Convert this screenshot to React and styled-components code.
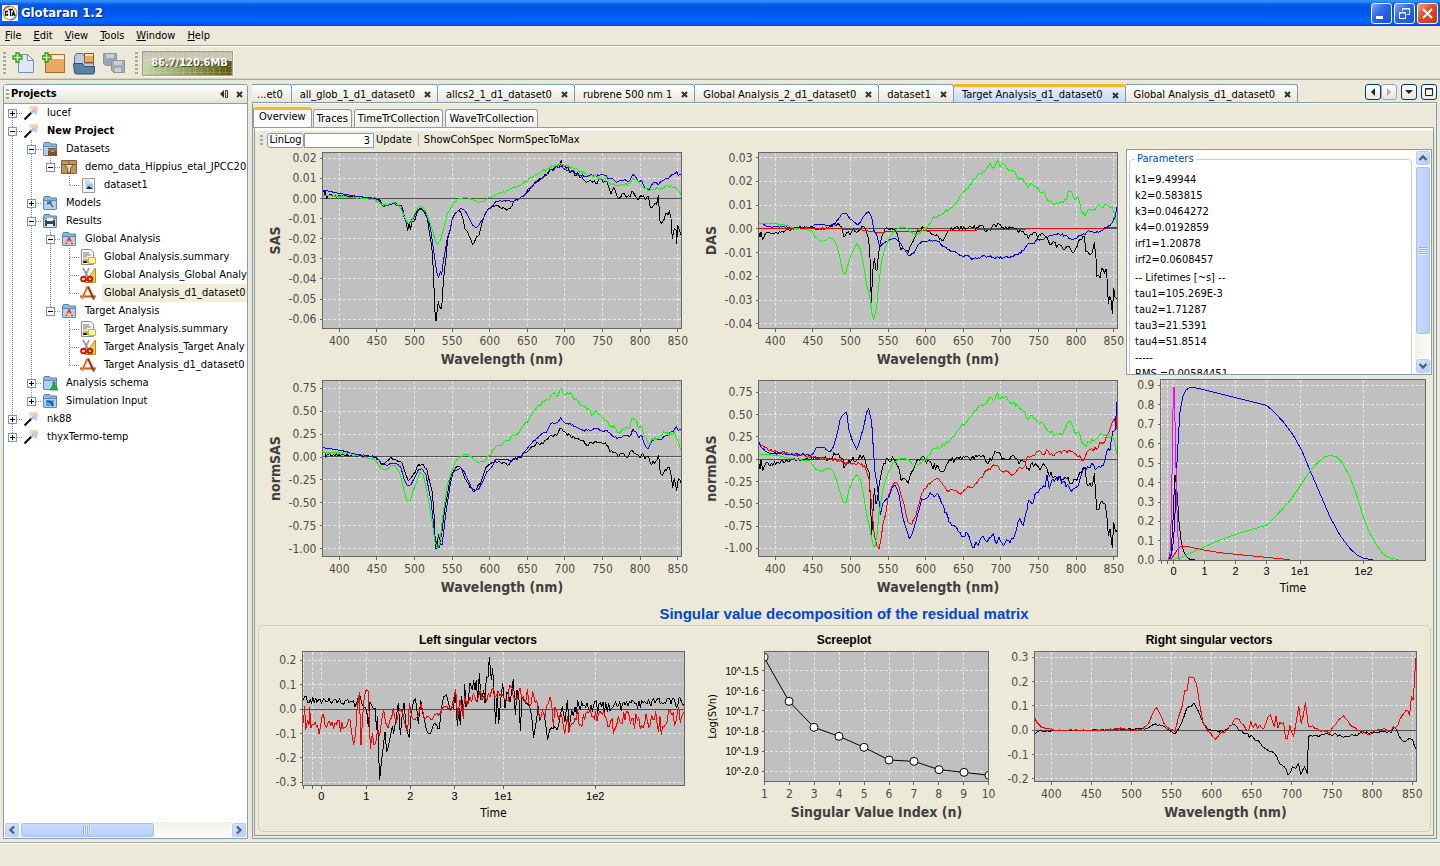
import React from "react";
import styled, { createGlobalStyle, css } from "styled-components";

const UI = '"DejaVu Sans Condensed", "DejaVu Sans", sans-serif';
const ARIAL = '"Liberation Sans", Arial, sans-serif';
const BEIGE = "#ece9d8";
const EDGE = "#7f9db9";

const GlobalStyle = createGlobalStyle`
  *, *::before, *::after { box-sizing: border-box; }
  body { margin: 0; background: ${BEIGE}; font: 11px/14px ${UI}; color: #000; }
  button, input { font: inherit; color: inherit; margin: 0; padding: 0; }
  button { background: none; border: 0; white-space: nowrap; }
  svg { display: block; flex: none; }
`;

/* ---------- window frame ---------- */
const Window = styled.div`
  display: flex;
  flex-direction: column;
  min-height: 100vh;
`;
const TitleBar = styled.header`
  display: flex;
  align-items: center;
  gap: 3px;
  height: 26px;
  padding: 0 2px;
  background: linear-gradient(#2b8bff 0, #3a93ff 1px, #0a5fe8 4px, #0054e3 8px, #0058ec 14px, #0066ff 19px, #0061fa 23px, #003dd0 26px);
`;
const AppTitle = styled.h1`
  flex: 1;
  margin: 0;
  font: bold 13px/16px ${UI};
  color: #fff;
  text-shadow: 1px 1px 1px #0a1883;
`;
const FrameButton = styled.button`
  display: grid;
  place-items: center;
  width: 21px;
  height: 21px;
  margin-left: -1px;
  border: 1px solid #fff;
  border-radius: 3px;
  background: ${(p) =>
    p.$close
      ? "linear-gradient(135deg, #f0a088, #e0492a 45%, #c83a10)"
      : "linear-gradient(135deg, #7ea6f8, #2a66e8 45%, #1c50d8)"};
`;
const FrameButtons = styled.div`
  display: flex;
  gap: 3px;
`;
const MenuBar = styled.nav`
  display: flex;
  gap: 12px;
  height: 21px;
  padding: 2px 5px;
  border-bottom: 1px solid #fff;
  box-shadow: inset 0 -1px #aca899;
`;
const MenuItem = styled.button`
  &::first-letter { text-decoration: underline; }
`;
const ToolBar = styled.div`
  display: flex;
  align-items: center;
  height: 33px;
  padding: 0 3px;
  border-bottom: 1px solid #aca899;
  box-shadow: inset 0 -1px #d6d2c2;
`;
const Grip = styled.span`
  flex: none;
  width: 3px;
  height: ${(p) => p.$h}px;
  background: repeating-linear-gradient(#a9a696 0 2px, transparent 2px 4px);
`;
const ToolButton = styled.button`
  display: grid;
  place-items: center;
  width: 30px;
  height: 28px;
`;
const ToolGroup = styled.div`
  display: flex;
  padding: 0 6px 0 3px;
`;
const HeapMeter = styled.button`
  width: 91px;
  height: 25px;
  margin-left: 4px;
  padding-left: 4px;
  border: 1px solid #a3a08c;
  box-shadow: 0 1px #fff, 1px 0 #fff;
  background:
    linear-gradient(rgba(236, 233, 216, 0.2) 1px, transparent 1px) 0 2px / 100% 6px,
    linear-gradient(90deg, rgba(236, 233, 216, 0.2) 1px, transparent 1px) 4px 0 / 6px 100%,
    linear-gradient(#c2c0ae, #d3d1be) 0 0 / 100% 9px no-repeat,
    linear-gradient(90deg, #c5d8a4, #8c9a58 55%, #6f6d1e 85%, #5e5a10);
  font: bold 11px/22px ${UI};
  color: #fff;
  text-shadow: 1px 1px 1px #333;
`;
const Main = styled.main`
  flex: 1;
  display: flex;
  gap: 4px;
  padding: 4px 3px 3px;
`;
const StatusBar = styled.footer`
  height: 24px;
  border-top: 1px solid #aca899;
  box-shadow: inset 0 1px #fff;
`;

/* ---------- project tree ---------- */
const SidePanel = styled.aside`
  flex: none;
  display: flex;
  flex-direction: column;
  width: 245px;
  border: 1px solid ${EDGE};
  border-radius: 3px 3px 0 0;
  background: #fff;
  overflow: hidden;
`;
const PanelHeader = styled.div`
  display: flex;
  align-items: center;
  height: 19px;
  padding: 0 0 0 2px;
  border-bottom: 1px solid ${EDGE};
  background: linear-gradient(#fff, #f0efe8 60%, #e4e2d4);
`;
const PanelTitle = styled.h2`
  flex: 1;
  margin: 0 0 0 2px;
  font: bold 11px/14px ${UI};
`;
const IconButton = styled.button`
  display: grid;
  place-items: center;
  width: 15px;
  height: 15px;
`;
const Tree = styled.ul`
  flex: 1;
  margin: 0;
  padding: 0;
  list-style: none;
`;
const TreeRow = styled.li`
  display: flex;
  align-items: center;
  height: 18px;
  white-space: nowrap;
`;
const TreeLabel = styled.span`
  margin-left: 6px;
  padding: 0 2px;
  line-height: 18px;
  font-weight: ${(p) => (p.$bold ? "bold" : "normal")};
  background: ${(p) => (p.$selected ? "#f3eed9" : "none")};
`;
const ScrollTrack = styled.div`
  display: flex;
  flex-direction: ${(p) => (p.$vertical ? "column" : "row")};
  flex: none;
  ${(p) => (p.$vertical ? css`width: 16px;` : css`height: 16px;`)}
  background: linear-gradient(${(p) => (p.$vertical ? "90deg" : "180deg")}, #f0efe8, #fefefb);
`;
const ScrollButton = styled.button`
  display: grid;
  place-items: center;
  flex: none;
  width: 16px;
  height: 16px;
  border: 1px solid #fff;
  border-radius: 3px;
  background: linear-gradient(135deg, #dbe6fe, #b6cbf7);
  box-shadow: inset 0 0 0 1px #b9cbf3;
`;
const ScrollThumb = styled.div`
  display: grid;
  place-items: center;
  flex: ${(p) => p.$size} 0 0;
  border: 1px solid #fff;
  border-radius: 3px;
  background: linear-gradient(${(p) => (p.$vertical ? "90deg" : "180deg")}, #cbdafd, #b9cdf9);
  box-shadow: inset 0 0 0 1px #a9bff0;
  &::after {
    content: "";
    width: 8px;
    height: 8px;
    background: repeating-linear-gradient(${(p) => (p.$vertical ? "180deg" : "90deg")}, #8fb0f5 0 1px, #e8f0ff 1px 2px);
  }
`;
const ScrollRest = styled.div`
  flex: ${(p) => p.$size} 0 0;
`;

/* ---------- document area ---------- */
const Documents = styled.section`
  flex: 1;
  min-width: 0;
  display: flex;
  flex-direction: column;
`;
const TabStrip = styled.div`
  display: flex;
  height: 18px;
`;
const DocTab = styled.div`
  display: flex;
  align-items: center;
  gap: 5px;
  height: ${(p) => (p.$active ? 19 : 18)}px;
  padding: ${(p) => (p.$cut ? "2px 8px 0 5px" : "2px 2px 0 8px")};
  border: 1px solid ${EDGE};
  border-width: 1px 1px 0 0;
  border-radius: 0 3px 0 0;
  background: linear-gradient(#fff, #f1f0e9 60%, #e9e7da);
  ${(p) =>
    p.$active &&
    css`
      border-top: 3px solid #fdb52c;
      padding-top: 0;
      background: linear-gradient(#e8eefb, #c9d8f6);
    `}
`;
const StripButtons = styled.div`
  display: flex;
  gap: 4px;
  margin-left: auto;
`;
const StripGroup = styled.div`
  display: flex;
`;
const StripButton = styled.button`
  display: grid;
  place-items: center;
  width: 16px;
  height: 16px;
  border: 1px solid ${(p) => (p.disabled ? "#8fa6bd" : "#003c74")};
  border-radius: 3px;
  background: linear-gradient(#fff, #e8e6da);
`;
const DocBody = styled.div`
  flex: 1;
  display: flex;
  flex-direction: column;
  padding: 4px 2px 2px 1px;
  border: 1px solid ${EDGE};
  box-shadow: inset 0 1px #fff;
`;
const ViewTabs = styled.div`
  display: flex;
  align-items: flex-end;
  gap: 2px;
  height: 20px;
`;
const ViewTab = styled.button`
  height: 18px;
  padding: 0 3px;
  border: 1px solid #919b9c;
  border-bottom: 0;
  border-radius: 3px 3px 0 0;
  background: linear-gradient(#fff, #f0efe6);
  ${(p) =>
    p.$active &&
    css`
      height: 21px;
      margin: 0 -1px -1px -1px;
      padding: 0 5px 4px;
      border-top: 3px solid #fdb52c;
      background: #fbfbfa;
    `}
`;
const View = styled.div`
  flex: 1;
  border: 1px solid #919b9c;
  box-shadow: inset 0 3px #fff;
  padding-top: 3px;
`;
const ViewBar = styled.div`
  display: flex;
  align-items: center;
  height: 18px;
  padding: 0 5px;
`;
const Toggle = styled.button`
  width: 37px;
  height: 15px;
  margin-left: 4px;
  border: 1px solid ${EDGE};
  border-radius: 3px;
  background: #fff;
  line-height: 12px;
`;
const NumberBox = styled.input`
  width: 70px;
  height: 15px;
  padding-right: 3px;
  border: 1px solid ${EDGE};
  background: #fff;
  text-align: right;
`;
const FlatButton = styled.button`
  margin: 0 2px;
`;
const Divider = styled.span`
  width: 1px;
  height: 12px;
  margin: 0 3px 0 4px;
  background: #b5b2a2;
`;
const ChartGrid = styled.div`
  display: grid;
  grid-template-columns: 434fr 434fr 306fr;
  padding: 0 1px 0 3px;
`;
const ChartSvg = styled.svg`
  width: 100%;
  height: auto;
`;
const ParamPanel = styled.div`
  display: flex;
  aspect-ratio: 306 / 226;
  align-self: start;
  border: 1px solid ${EDGE};
  background: #fff;
  overflow: hidden;
`;
const ParamScroll = styled.div`
  flex: 1;
  min-width: 0;
  overflow: hidden;
  padding: 2px 3px 0 2px;
`;
const ParamBox = styled.fieldset`
  min-width: 0;
  height: 240px;
  margin: 0;
  padding: 6px 5px;
  border: 1px solid #d0d0bf;
  border-radius: 4px;
`;
const Legend = styled.legend`
  margin-left: 0;
  padding: 0 2px;
  color: #0046d5;
`;
const ParamList = styled.ul`
  margin: 0 0 2px;
  padding: 0;
  list-style: none;
  line-height: 16px;
`;
const SectionTitle = styled.h2`
  margin: 0;
  font: bold 15px/22px ${ARIAL};
  text-align: center;
  color: #0046d5;
`;
const SvdBox = styled.div`
  display: grid;
  grid-template-columns: 435fr 306fr 430fr;
  margin: 0 2px 2px 3px;
  border: 1px solid #d0d0bf;
  border-radius: 5px;
`;

/* ---------- chart drawing ---------- */

/* Expands a compact trace ("x,y" knots, "nA" sets the jitter) to a polyline. */
function expand(text, seed) {
  let s = seed * 7919 + 17;
  const rnd = () => {
    s = (s * 1103515245 + 12345) % 2147483648;
    return s / 2147483648 - 0.5;
  };
  let noise = 0;
  let prev = null;
  const out = [];
  text.trim().split(/\s+/).forEach((token) => {
    if (token[0] === "n") {
      noise = Number(token.slice(1));
      return;
    }
    const [x, y] = token.split(",").map(Number);
    if (prev && noise > 0) {
      const steps = Math.floor((x - prev[0]) / 4);
      for (let i = 1; i < steps; i += 1) {
        const t = i / steps;
        out.push([prev[0] + (x - prev[0]) * t, prev[1] + (y - prev[1]) * t + rnd() * 2 * noise]);
      }
    }
    out.push([x, y]);
    prev = [x, y];
  });
  return out.map(([x, y]) => x.toFixed(1) + "," + y.toFixed(1)).join(" ");
}

const GRAY = "#4c4c4c";

function Chart({ label, w, h, box, xt, yt, zero, series, from, scale = [1 / 3, 1 / 3], title, xLabel, yLabel, small, smallY, marks, boldX = true }) {
  const [x0, y0, x1, y1] = box;
  const id = "clip-" + label.replace(/\W/g, "");
  const mid = (x0 + x1) / 2;
  return (
    <ChartSvg viewBox={`0 0 ${w} ${h}`} role="img" aria-label={label}>
      <clipPath id={id}>
        <rect x={x0} y={y0} width={x1 - x0} height={y1 - y0} />
      </clipPath>
      <rect x={x0} y={y0} width={x1 - x0} height={y1 - y0} fill="#c0c0c0" />
      <g shapeRendering="crispEdges" stroke="#e6e6e6" strokeDasharray="3 2">
        {xt.map(([x], i) => <line key={i} x1={x} x2={x} y1={y0} y2={y1} />)}
        {yt.map(([y], i) => <line key={i} x1={x0} x2={x1} y1={y} y2={y} />)}
      </g>
      {zero && <line x1={x0} x2={x1} y1={zero} y2={zero} stroke="#505050" shapeRendering="crispEdges" />}
      <g clipPath={`url(#${id})`}>
        <g transform={`translate(${from[0]} ${from[1]}) scale(${scale[0]} ${scale[1]})`} fill="none" shapeRendering="crispEdges">
          {series.map(([color, pts], i) => (
            <polyline key={i} points={expand(pts, i + 1)} stroke={color} strokeLinejoin="round" vectorEffect="non-scaling-stroke" />
          ))}
        </g>
        {marks && (
          <g stroke="#000">
            <polyline points={marks.map((m) => m.join(",")).join(" ")} fill="none" />
            {marks.map(([x, y]) => <circle key={x} cx={x} cy={y} r="4" fill="#fff" />)}
          </g>
        )}
      </g>
      <rect x={x0} y={y0} width={x1 - x0} height={y1 - y0} fill="none" stroke="#666" shapeRendering="crispEdges" />
      <g stroke="#666" shapeRendering="crispEdges">
        {xt.map(([x], i) => <line key={i} x1={x} x2={x} y1={y1} y2={y1 + 3} />)}
        {yt.map(([y], i) => <line key={i} x1={x0 - 3} x2={x0} y1={y} y2={y} />)}
      </g>
      <g fontFamily={small ? ARIAL : UI} fontSize={small ? 11 : 12} fill={small ? "#000" : GRAY} textAnchor="middle">
        {xt.map(([x, t], i) => <text key={i} x={x} y={y1 + (small ? 14 : 16)}>{t}</text>)}
      </g>
      <g fontFamily={smallY ? ARIAL : UI} fontSize={smallY ? 10 : 12} fill={smallY ? "#000" : GRAY} textAnchor="end">
        {yt.map(([y, t], i) => <text key={i} x={x0 - 6} y={y + 4}>{t}</text>)}
      </g>
      <text x={mid} y={y1 + (boldX ? 35 : 31)} textAnchor="middle" fontFamily={UI} fontSize={boldX ? 14 : 12} fontWeight={boldX ? "bold" : "normal"} fill={boldX ? "#404040" : "#000"}>
        {xLabel}
      </text>
      {yLabel && (
        <text transform={`translate(${smallY ? 22 : x0 - 43} ${(y0 + y1) / 2}) rotate(-90)`} textAnchor="middle" fontFamily={UI} fontSize={smallY ? 11 : 14} fontWeight={smallY ? "normal" : "bold"} fill={smallY ? "#000" : "#404040"}>
          {yLabel}
        </text>
      )}
      {title && (
        <text x={title[1]} y="18" textAnchor="middle" fontFamily={ARIAL} fontSize="12" fontWeight="bold">{title[0]}</text>
      )}
    </ChartSvg>
  );
}

const ticks = (start, step, labels) => labels.map((t, i) => [start + step * i, t]);
const WAVES = ["400", "450", "500", "550", "600", "650", "700", "750", "800", "850"];
const BLUE = "#2200ee";
const GREEN = "#00ff00";

const sas = [
  ["#000", "203,140 208,138 209,150 212,138 214,160 n5 220,152 250,152 n3 340,157 368,162 378,170 385,184 400,178 415,176 420,172 430,182 440,182 448,215 454,235 458,257 462,238 466,253 472,228 480,224 487,200 495,190 502,192 510,202 517,220 522,255 530,300 534,360 538,450 541,526 544,526 546,500 550,468 553,485 557,490 560,492 563,440 568,380 573,340 577,290 585,258 592,220 600,203 612,195 620,208 626,230 630,253 638,262 643,275 648,285 653,298 658,292 664,276 672,270 678,245 685,220 692,205 703,190 712,183 725,182 735,188 745,188 755,196 765,190 772,182 776,168 785,165 800,155 815,140 n6 830,125 845,110 860,100 875,88 890,72 910,68 919,46 922,62 935,70 950,80 965,90 980,95 995,112 1010,110 1022,115 1035,100 1045,112 1055,108 1062,130 1068,148 1075,128 1085,150 1090,160 1098,155 1102,145 1115,157 1125,155 1131,138 1140,152 1150,165 1157,150 1165,152 1172,165 1180,155 1186,187 1195,182 1205,178 1210,152 1215,228 1220,236 1228,222 1232,205 1240,210 1243,197 1248,220 1252,282 1258,250 1263,255 1265,295 1268,240 1275,262 1277,270"],
  [BLUE, "203,136 215,137 250,145 300,153 350,159 n2 370,165 380,178 390,182 402,180 415,175 430,182 440,190 447,215 455,235 465,235 472,222 480,210 490,192 500,192 510,205 520,225 528,260 535,310 540,345 546,385 551,398 556,380 560,388 565,350 570,320 577,280 585,255 592,220 600,205 617,189 627,195 640,215 650,235 662,248 672,240 682,225 690,208 700,193 712,185 725,168 760,167 775,170 795,160 810,148 825,132 840,115 855,105 865,98 n4 880,80 900,70 919,62 925,70 940,75 960,83 980,93 1000,92 1020,90 1050,92 1058,100 1075,102 1085,112 1105,106 1125,105 1133,88 1142,95 1150,110 1160,105 1168,125 1180,137 1190,120 1200,113 1210,120 1220,108 1235,100 1245,95 1260,85 1265,80 1270,92 1278,90"],
  [GREEN, "n1 203,150 230,153 300,158 350,163 362,165 375,176 390,180 400,178 415,172 430,180 440,195 450,220 458,232 468,232 475,215 483,198 493,185 505,187 515,205 525,235 535,265 542,288 547,300 555,288 562,265 570,235 577,205 585,195 595,175 610,162 632,157 655,165 672,172 688,168 n2 700,158 715,155 730,145 750,142 770,130 795,123 n4 810,110 830,98 850,85 880,70 900,60 919,55 925,60 960,70 970,77 990,85 1000,95 1020,92 1040,102 1050,100 1065,115 1085,122 1105,120 1125,115 1135,100 1145,105 1155,118 1170,132 1180,138 1195,132 1210,130 1230,125 1260,125 1270,135 1279,152"],
];
const das = [
  ["#000", "n4 190,255 195,275 198,262 203,285 210,268 225,264 240,264 270,258 300,250 350,246 n6 370,255 390,250 420,240 428,235 440,245 446,275 455,262 465,270 475,250 485,262 495,253 505,243 515,265 521,280 525,340 529,472 533,380 538,340 543,375 546,375 550,330 556,292 562,270 575,248 590,250 600,255 610,280 618,315 626,310 632,318 640,322 650,295 660,275 668,255 690,248 700,260 712,270 730,275 742,288 752,272 765,255 790,248 830,248 850,248 862,240 870,258 888,256 893,240 903,245 909,235 920,247 940,250 965,250 970,262 985,260 1000,280 1010,270 1020,262 1028,280 1040,265 1055,275 1065,300 1080,292 1085,308 1095,300 1105,315 1120,305 1132,322 1142,310 1150,290 1160,285 1168,275 1173,320 1178,320 1185,330 1192,322 1198,292 1203,340 1204,395 1210,390 1215,398 1220,370 1225,375 1228,385 1233,372 1236,400 1240,475 1244,455 1248,465 1252,505 1256,430 1260,455 1265,462"],
  ["#f00", "190,250 400,250 440,252 500,255 530,260 555,263 590,258 620,258 640,260 680,257 760,256 820,257 860,254 990,253 1000,250 1240,249 1266,247"],
  ["#00f", "n2 190,235 205,238 220,245 250,245 300,247 350,247 360,238 385,238 400,242 415,240 430,222 440,207 455,204 465,222 475,230 487,240 497,230 505,215 520,200 526,208 532,225 536,255 543,265 548,280 554,305 563,296 580,288 590,282 602,280 612,290 625,310 642,333 658,322 668,302 680,290 700,288 n4 728,290 740,300 758,315 775,320 790,328 800,333 815,330 830,343 850,338 870,333 890,337 905,336 925,338 950,335 965,328 985,318 1000,295 1010,297 1030,283 1060,275 1080,268 1110,270 1130,285 1145,280 1160,270 1175,262 1190,258 1210,262 1225,255 1240,243 1250,235 1255,225 1260,215 1266,185"],
  [GREEN, "n1 190,235 240,236 270,240 300,250 350,256 360,275 380,290 390,287 400,278 415,282 425,300 435,340 445,385 452,385 460,355 468,330 485,296 495,310 505,355 515,420 525,460 530,500 536,525 545,485 551,420 560,345 572,305 585,275 600,255 620,245 635,250 648,262 665,272 680,258 n5 700,240 715,215 735,212 750,200 780,180 800,148 820,130 833,105 843,100 850,85 860,88 875,68 885,55 895,70 908,47 915,65 925,55 940,75 955,75 965,95 985,105 998,128 1008,115 1020,125 1035,142 1045,140 1055,162 1075,178 1100,170 1115,165 1120,137 1130,140 1138,162 1150,158 1158,195 1170,212 1182,192 1200,195 1212,178 1220,185 1235,180 1250,185 1260,215 1266,235"],
];
const normSas = [
  ["#000", "203,240 210,242 212,256 n4 220,248 300,250 350,252 370,262 382,278 395,268 410,258 425,265 437,268 447,290 460,325 470,315 480,302 487,282 500,278 515,290 524,330 532,360 538,440 541,528 546,528 550,488 556,510 562,470 568,420 575,380 582,340 590,305 600,290 612,283 622,295 630,320 640,335 650,350 655,358 665,350 678,330 688,300 697,282 712,272 735,270 757,280 772,265 795,255 n6 810,240 835,225 850,213 865,215 875,203 890,192 905,190 919,168 925,180 945,190 960,200 980,205 995,220 1015,215 1035,210 1055,220 1065,240 1080,242 1090,255 1105,243 1120,255 1132,235 1142,245 1155,258 1163,243 1170,260 1178,252 1186,275 1203,268 1211,250 1216,305 1222,310 1230,293 1243,285 1250,320 1253,348 1258,318 1265,355 1270,320 1278,332"],
  [BLUE, "n1 203,227 240,232 300,246 350,253 370,262 380,275 395,280 410,273 425,275 437,285 447,320 457,340 468,338 480,315 490,293 500,290 512,305 520,345 528,385 535,450 541,500 548,525 553,528 556,515 561,518 567,470 573,420 580,375 587,330 595,300 605,295 617,287 627,298 640,325 650,350 660,355 672,350 685,325 695,300 710,285 722,262 745,262 770,265 790,257 n3 805,245 820,225 840,205 860,185 875,180 887,155 905,152 917,138 928,152 945,155 965,168 985,175 1005,175 1020,168 1035,175 1055,175 1070,190 1090,198 1110,192 1125,193 1133,172 1142,178 1152,198 1160,190 1170,220 1180,230 1190,208 1205,200 1220,202 1235,190 1255,178 1265,165 1270,175 1278,172"],
  [GREEN, "n1 203,242 240,240 280,244 330,258 355,258 370,275 380,290 395,292 410,280 422,282 435,305 445,345 455,385 465,388 475,355 485,330 495,300 505,310 515,355 525,410 533,460 540,510 548,530 556,500 562,445 568,400 577,340 590,300 600,270 615,255 632,246 650,255 670,272 685,268 n6 700,252 718,232 728,220 740,222 760,205 780,190 795,178 810,155 830,130 842,110 862,90 880,85 888,68 898,62 908,75 919,50 925,65 945,62 960,82 980,100 1000,108 1010,130 1020,118 1040,135 1055,145 1065,165 1078,160 1088,180 1105,172 1125,165 1130,140 1142,142 1150,170 1160,162 1170,195 1180,215 1195,200 1210,198 1230,182 1250,188 1258,180 1270,208 1279,235"],
];
const normDas = [
  ["#000", "n6 190,265 195,290 198,265 203,295 210,278 250,272 290,263 340,262 380,255 400,262 n9 420,248 430,245 445,262 447,288 458,275 470,265 490,262 505,250 515,285 522,300 527,400 530,492 535,400 538,350 543,395 548,380 556,320 562,290 575,258 600,265 610,285 618,325 630,320 640,335 650,300 660,280 670,262 690,262 710,280 730,285 745,300 760,270 780,262 830,258 862,252 875,272 890,265 895,250 908,243 920,260 940,262 965,258 972,275 990,270 1000,290 1020,275 1035,295 1045,275 1060,305 1080,312 1100,325 1115,320 1132,335 1145,325 1155,300 1170,285 1175,335 1190,345 1198,305 1203,380 1205,412 1212,412 1220,388 1230,395 1235,425 1240,490 1245,470 1252,528 1256,450 1262,480 1266,475"],
  ["#f00", "n4 190,215 205,222 220,235 260,242 320,250 370,258 430,265 460,275 500,275 512,290 522,320 530,400 538,490 545,520 552,530 558,500 565,450 573,420 580,370 590,345 602,330 612,345 622,380 632,420 640,452 650,458 658,440 668,410 680,365 700,335 728,320 740,332 758,358 n6 775,355 800,362 820,342 835,345 850,325 862,318 872,295 890,285 905,280 920,298 940,298 955,307 970,290 985,288 1000,252 1020,250 1030,238 1050,245 1055,232 1065,250 1090,240 1120,238 1145,250 1165,265 1180,235 1190,230 1205,232 1215,210 1225,215 1235,190 1245,172 1252,150 1258,140 1264,170 1266,120"],
  ["#00f", "n3 190,207 200,228 220,242 270,246 350,248 365,225 385,225 405,240 415,225 425,190 435,145 445,128 455,122 462,175 470,200 485,232 495,205 505,170 515,120 521,110 530,150 535,230 540,300 548,350 556,428 563,395 580,378 590,350 602,342 612,370 622,430 635,475 643,500 652,485 662,450 672,415 680,380 695,380 705,362 718,375 728,365 n9 740,395 750,422 762,450 775,460 790,480 800,495 818,485 833,528 842,510 850,520 860,495 875,510 888,495 895,485 905,515 912,495 925,522 940,505 955,500 965,470 975,440 985,460 992,425 1000,385 1010,395 1025,360 1040,350 1050,345 1056,310 1063,350 1070,325 1090,315 1105,330 1130,358 1145,345 1155,320 1170,285 1190,275 1205,290 1225,280 1235,240 1245,235 1253,180 1260,175 1266,90"],
  [GREEN, "n1 190,247 240,249 300,262 345,266 360,290 378,298 400,288 415,297 425,325 435,360 445,390 453,392 462,355 475,320 485,308 497,325 505,365 512,410 520,450 530,500 538,528 546,490 552,425 565,345 580,300 595,272 620,258 640,263 655,280 670,278 685,265 n6 700,250 715,230 740,222 760,208 780,190 795,168 815,150 835,120 850,105 870,98 885,75 895,85 908,62 912,80 930,75 950,95 970,103 985,118 998,142 1008,130 1030,150 1045,155 1055,172 1080,190 1105,182 1120,150 1130,155 1140,182 1150,178 1160,210 1170,222 1182,210 1200,205 1215,188 1235,195 1255,195 1260,220 1266,245"],
];
const concentrations = [
  ["#800080", "122,565 917,565"],
  ["#000", "148,563 153,545 158,470 162,370 165,310 168,330 172,370 177,450 183,505 190,535 200,555 210,562 225,563"],
  ["#f00", "155,560 165,545 172,532 180,525 200,523 240,532 300,542 400,552 480,560 510,563"],
  ["#00f", "150,563 158,530 163,470 167,380 171,270 176,180 180,120 188,75 198,54 210,46 225,47 300,65 380,85 439,100 460,117 490,150 520,190 545,235 570,295 600,365 630,435 660,490 690,530 710,548 730,559 760,563"],
  [GREEN, "145,563 175,560 195,550 230,535 290,508 350,486 400,471 439,460 460,440 490,408 515,380 540,342 570,298 595,270 615,254 632,250 650,255 668,274 690,315 710,370 730,435 750,485 770,520 790,547 810,558 836,563"],
  ["#f0f", "145,565 150,540 154,430 157,250 160,45 163,45 166,200 169,330 172,450 177,560 180,565"],
];
const leftVectors = [
  ["#000", "n12 145,300 190,300 200,310 210,300 290,305 n14 300,320 310,290 320,310 n8 335,330 340,380 345,305 352,320 360,325 365,390 368,350 371,460 374,538 380,480 386,430 390,395 395,455 400,440 408,400 412,380 416,400 424,350 430,310 436,405 442,340 447,310 454,385 463,412 468,350 475,305 481,295 490,372 497,300 505,345 513,385 521,400 530,390 541,370 553,385 560,320 566,290 574,284 585,330 595,325 601,275 607,378 612,325 616,375 620,290 626,345 629,252 633,320 640,300 645,250 652,270 656,240 660,270 664,240 668,305 673,220 678,300 686,270 690,310 694,230 699,232 703,172 709,240 713,205 718,300 722,372 727,275 731,372 737,300 743,250 750,325 756,275 765,305 775,237 781,345 786,270 792,300 796,392 801,290 810,300 820,315 830,350 836,412 843,370 850,320 854,362 862,330 868,345 873,380 878,420 884,390 895,385 907,390 915,350 922,320 930,365 937,300 943,380 950,330 n22 960,320 1000,325 1040,320 n15 1090,318 1140,312 1200,310 1280,308 1287,318"],
  ["#f00", "n16 145,370 149,320 152,388 158,360 162,375 164,322 168,385 180,365 192,402 202,345 210,375 n16 240,370 265,385 285,360 296,435 302,400 306,330 313,278 318,435 323,350 328,290 334,268 340,275 346,445 352,400 357,435 368,390 374,408 380,360 386,330 394,375 405,360 415,325 424,368 430,340 438,332 447,360 458,392 463,310 n5 470,350 480,358 490,345 498,312 508,355 520,350 532,360 545,340 556,340 566,320 575,318 587,332 595,300 602,268 608,352 615,300 625,355 n20 628,290 640,310 650,305 660,290 672,285 690,285 705,290 710,270 720,290 730,275 745,290 755,300 767,258 775,290 790,280 805,290 812,310 817,268 823,320 833,275 845,300 852,345 862,330 870,352 880,310 890,310 895,380 900,320 907,340 915,345 925,380 n29 950,370 960,355 1010,350 1050,350 1072,355 1075,400 1090,350 1130,355 1160,375 1190,345 1223,380 1250,345 1280,350 1287,335"],
];
const rightVectors = [
  ["#000", "n2 714,405 720,395 750,392 850,390 950,386 965,373 985,378 1000,392 1010,402 1020,380 1028,355 1035,325 1045,318 1050,310 1060,335 1070,370 1080,390 n5 1100,395 1120,390 1130,375 1140,380 1155,400 1175,412 1190,430 1205,450 1220,460 1230,490 1240,500 1248,525 1258,500 1265,505 1270,490 1275,525 1283,500 1289,520 1291,410 1310,408 1345,402 1365,412 1390,405 1430,398 1465,398 1474,382 1482,408 1495,425 1510,418 1518,448"],
  ["#f00", "n2 714,350 720,368 730,382 760,391 850,391 900,385 920,392 940,388 955,370 962,345 971,322 978,340 987,370 1000,388 1010,395 1018,350 1025,320 1031,270 1036,270 1040,230 1050,233 1056,255 1062,310 1070,370 1080,395 n6 1095,418 1105,400 1115,398 1125,378 1140,355 1155,375 1165,392 n20 1180,370 1215,362 1235,372 1247,415 1252,375 1260,410 1266,360 1271,320 1276,370 1285,308 1291,378 n5 1310,385 1335,400 1350,370 1365,347 1378,372 1395,392 1415,402 1435,390 1450,385 1465,390 n8 1480,375 1492,340 1500,330 1504,345 1508,290 1512,300 1517,175"],
];
const screeMarks = [172, 304, 382, 409, 442, 480, 484, 509, 517, 526].map((y, i) => [70 + 25 * i, y / 3 - 26]);

/* ---------- icons ---------- */
const Cross = () => (
  <svg width="7" height="7" viewBox="0 0 7 7" stroke="#333" strokeWidth="2"><path d="M1 1l5 5M6 1l-5 5" /></svg>
);
const Chevron = ({ turn }) => (
  <svg width="10" height="10" viewBox="0 0 10 10" fill="none" stroke="#4d6185" strokeWidth="2.4">
    <path d="M1.5 7L5 3.5 8.500 7" transform={`rotate(${turn} 5 5)`} />
  </svg>
);
const Triangle = ({ turn = 0, color = "#222" }) => (
  <svg width="8" height="8" viewBox="0 0 8 8" fill={color}><path d="M2 4L6 0V8Z" transform={`rotate(${turn} 4 4)`} /></svg>
);
const PlusBadge = ({ x = 1 }) => (
  <path d={`M${x + 3} 2h3v3h3v3h-3v3h-3V8h-3V5h3z`} fill="#d8f5c0" stroke="#2f9a0c" strokeWidth="1.3" />
);
const AppIcon = () => (
  <svg width="16" height="16" viewBox="0 0 16 16">
    <rect width="16" height="16" fill="#fff" />
    <circle cx="8" cy="8" r="6.800" fill="none" stroke="#e3a93c" strokeWidth="1.600" />
    <path d="M1.500 6A6.800 6.800 0 0 1 8 1.200" fill="none" stroke="#d9474a" strokeWidth="1.400" />
    <path d="M8 14.800A6.800 6.800 0 0 0 14.500 10" fill="none" stroke="#4f9ad0" strokeWidth="1.400" />
    <path d="M6 6.500H3.500V10H5.500V8.500M6.500 4.500H11M8.500 4.500V11M10 11L11.500 6.500L13 11M10.500 9.500H12.500" fill="none" stroke="#111" strokeWidth="1.300" />
  </svg>
);
const NewFile = () => (
  <svg width="24" height="24" viewBox="0 0 24 24">
    <path d="M6.500 3.500h9l6 6v12h-15z" fill="#dbe8f5" stroke="#7391b0" />
    <path d="M15.500 3.500v6h6z" fill="#fff" stroke="#7391b0" />
    <PlusBadge x={1} />
  </svg>
);
const NewProject = () => (
  <svg width="24" height="24" viewBox="0 0 24 24">
    <rect x="3.500" y="3.500" width="19" height="18" fill="#eca862" stroke="#a96e30" />
    <path d="M4 4h18v4H4z" fill="#f9ead5" />
    <PlusBadge x={0} />
  </svg>
);
const OpenProject = () => (
  <svg width="24" height="24" viewBox="0 0 24 24">
    <path d="M2.500 20V5.500l2-3h6l2 3V12h9v8z" fill="#b9cce0" stroke="#4f6c8c" />
    <rect x="12.500" y="2.500" width="9" height="9" fill="#eca862" stroke="#8a5a2b" />
    <path d="M13 3h8v2h-8z" fill="#f9dfbf" />
    <path d="M1.500 12.500h9l2 3h10v6l-1 1.500h-18l-1-1.500z" fill="#5d7fa4" stroke="#35506e" />
  </svg>
);
const SaveAll = () => (
  <svg width="24" height="24" viewBox="0 0 24 24" stroke="#8a94a0">
    <path d="M1.500 2.500h13v12h-11l-2-2z" fill="#9ca5b0" />
    <path d="M4 3h8v4H4z" fill="#c9ced4" stroke="none" />
    <path d="M9.500 9.500h13v12h-11l-2-2z" fill="#a3abb5" />
    <path d="M12 10h8v4h-8zM13 17h6v4h-6z" fill="#ccd1d6" stroke="none" />
  </svg>
);
const Folder = ({ children }) => (
  <>
    <path d="M1.500 14V3.500l1-2h5l1 1.500h6V14z" fill="#8fb6dc" stroke="#5580ad" />
    <path d="M1.500 5.500h13V14l-.5.500H2l-.5-.5z" fill="#b3d0ec" stroke="#5d8ab8" />
    {children}
  </>
);
const Glyphs = {
  wand: (
    <>
      <circle cx="12" cy="4" r="3" fill="#f5a8e4" opacity=".8" />
      <circle cx="8" cy="3" r="2" fill="#b8ec9a" opacity=".8" />
      <circle cx="12.500" cy="7.500" r="2" fill="#9ccdff" opacity=".8" />
      <circle cx="13" cy="2" r="1.500" fill="#ffd870" />
      <path d="M1.500 14.500L9 7" stroke="#111" strokeWidth="2.200" />
      <path d="M8 8L10.500 5.500" stroke="#bbb" strokeWidth="2" />
    </>
  ),
  datasets: <Folder><path d="M6 7h9v8H6z" fill="#7b5230" /><path d="M6 9h9M9 10.500h3" stroke="#c69b6d" /></Folder>,
  box: (
    <>
      <path d="M.5 1.500h15v13H.5z" fill="#c09560" stroke="#8a6434" />
      <path d="M.5 5.500h15M8 1.500v4" stroke="#80592c" />
      <path d="M4 6l2.500 3.500v4h3v-4L12 6" fill="#ddd2c0" stroke="#6f5a3c" />
    </>
  ),
  sheet: (
    <>
      <path d="M2.500 1.500h12v14h-12z" fill="#f4f4f4" stroke="#999" />
      <path d="M5 4h4M5 6h7" stroke="#a5b4c8" />
      <path d="M6 7h7v5H6z" fill="#9cc8ea" /><path d="M6 12l3-3 4 3z" fill="#1e2a58" />
    </>
  ),
  models: <Folder><path d="M5 7h4l-1 1 3 4M5 9l3-1" stroke="#2f4c70" strokeWidth="1.200" fill="none" /></Folder>,
  results: <Folder><path d="M3 7h10v6H3z" fill="#444" /><path d="M5 5h6v3H5zM5 11h6v3H5z" fill="#f5f5f5" /></Folder>,
  analysis: <Folder><path d="M5 13l3-6 3.500 6" stroke="#e0341c" strokeWidth="1.600" fill="none" /><path d="M5 11h7" stroke="#f5c542" strokeWidth="1.600" /></Folder>,
  summary: (
    <>
      <path d="M1.500.5h9l3 3v12h-12z" fill="#f7f7f5" stroke="#8a8a88" />
      <path d="M3 4h6M3 6h8M3 8h4" stroke="#777" />
      <path d="M3 10h5v4H3z" fill="#e0b020" /><path d="M3 12h4v2H3z" fill="#222" />
      <path d="M8.500 8.500h7v6h-7z" fill="#fff3a0" stroke="#cdb440" />
    </>
  ),
  cut: (
    <>
      <path d="M15.500 1v14.500H5z" fill="#f6d24a" stroke="#b98d16" />
      <path d="M3 1l5 9M9 1L5 10" stroke="#9a9a9a" strokeWidth="1.800" />
      <circle cx="3.500" cy="12" r="2.300" fill="none" stroke="#cc1515" strokeWidth="2" />
      <circle cx="10" cy="12" r="2.300" fill="none" stroke="#cc1515" strokeWidth="2" />
    </>
  ),
  result: (
    <>
      <path d="M0 11.500h16" stroke="#a8702e" strokeWidth="2.200" />
      <path d="M7.500 1.500L2 14" stroke="#f08a30" strokeWidth="2" />
      <path d="M8 1.500L14 14.500" stroke="#b02c1c" strokeWidth="2.200" />
      <path d="M7 2.500l-4 9" stroke="#e0502a" strokeWidth="1" />
    </>
  ),
  schema: <Folder><path d="M11 7v3l-3 5h8l-3-5V7z" fill="#23b14d" stroke="#0f7a30" strokeWidth=".7" /></Folder>,
  simulation: <Folder><path d="M4 7h8v6H4z" fill="#4f9bee" /><path d="M5 8l4 1 2 4" stroke="#12355e" strokeWidth="1.200" fill="none" /></Folder>,
};
const Glyph = ({ name }) => <svg width="16" height="16" viewBox="0 0 16 16">{Glyphs[name]}</svg>;

/* Connector cell: u/d = line up/down, r = line to the right, +/- = handle */
const Guide = ({ spec }) => {
  const handle = spec.includes("+") || spec.includes("-");
  return (
    <svg width="19" height="18" viewBox="0 0 19 18" shapeRendering="crispEdges">
      <g stroke="#8c8c8c" strokeDasharray="1 1">
        {spec.includes("u") && <path d="M8.500 0V9" />}
        {spec.includes("d") && <path d="M8.500 10V18" />}
        {(spec.includes("r") || handle) && <path d="M9 9.500H19" />}
      </g>
      {handle && (
        <>
          <rect x="4.500" y="5.500" width="8" height="8" fill="#f6f5f0" stroke="#7898b5" />
          <path d={spec.includes("+") ? "M6 9.500h5M8.500 7v5" : "M6 9.500h5"} stroke="#000" />
        </>
      )}
    </svg>
  );
};

const TREE = [
  [["d+"], "wand", "lucef"],
  [["ud-"], "wand", "New Project", "bold"],
  [["ud", "ud-"], "datasets", "Datasets"],
  [["ud", "ud", "u-"], "box", "demo_data_Hippius_etal_JPCC20"],
  [["ud", "ud", "", "ur"], "sheet", "dataset1"],
  [["ud", "ud+"], "models", "Models"],
  [["ud", "ud-"], "results", "Results"],
  [["ud", "ud", "ud-"], "analysis", "Global Analysis"],
  [["ud", "ud", "ud", "udr"], "summary", "Global Analysis.summary"],
  [["ud", "ud", "ud", "udr"], "cut", "Global Analysis_Global Analysi"],
  [["ud", "ud", "ud", "ur"], "result", "Global Analysis_d1_dataset0", "selected"],
  [["ud", "ud", "u-"], "analysis", "Target Analysis"],
  [["ud", "ud", "", "udr"], "summary", "Target Analysis.summary"],
  [["ud", "ud", "", "udr"], "cut", "Target Analysis_Target Analy"],
  [["ud", "ud", "", "ur"], "result", "Target Analysis_d1_dataset0"],
  [["ud", "ud+"], "schema", "Analysis schema"],
  [["ud", "u+"], "simulation", "Simulation Input"],
  [["ud+"], "wand", "nk88"],
  [["u+"], "wand", "thyxTermo-temp"],
];

const DOCS = ["all_glob_1_d1_dataset0", "allcs2_1_d1_dataset0", "rubrene 500 nm 1", "Global Analysis_2_d1_dataset0", "dataset1", "Target Analysis_d1_dataset0", "Global Analysis_d1_dataset0"];
const RATES = ["k1=9.49944", "k2=0.583815", "k3=0.0464272", "k4=0.0192859", "irf1=1.20878", "irf2=0.0608457"];
const LIFETIMES = ["-- Lifetimes [~s] --", "tau1=105.269E-3", "tau2=1.71287", "tau3=21.5391", "tau4=51.8514", "-----", "RMS =0.00584451"];

export default function App() {
  return (
    <Window>
      <GlobalStyle />
      <TitleBar>
        <AppIcon />
        <AppTitle>Glotaran 1.2</AppTitle>
        <FrameButtons>
          <FrameButton aria-label="Minimize">
            <svg width="13" height="13" viewBox="0 0 13 13"><path d="M1 9h7v3H1z" fill="#fff" /></svg>
          </FrameButton>
          <FrameButton aria-label="Restore">
            <svg width="13" height="13" viewBox="0 0 13 13" fill="none" stroke="#fff">
              <path d="M4.500 4V1.500h7v6H9M4 2h8M1.500 5.500h6v6h-6zM1 6h7" />
            </svg>
          </FrameButton>
          <FrameButton $close aria-label="Close">
            <svg width="13" height="13" viewBox="0 0 13 13" stroke="#fff" strokeWidth="2"><path d="M2 2l9 9M11 2l-9 9" /></svg>
          </FrameButton>
        </FrameButtons>
      </TitleBar>
      <MenuBar>
        {["File", "Edit", "View", "Tools", "Window", "Help"].map((m) => <MenuItem key={m}>{m}</MenuItem>)}
      </MenuBar>
      <ToolBar>
        <Grip $h={22} />
        <ToolGroup>
          <ToolButton aria-label="New File"><NewFile /></ToolButton>
          <ToolButton aria-label="New Project"><NewProject /></ToolButton>
          <ToolButton aria-label="Open Project"><OpenProject /></ToolButton>
          <ToolButton aria-label="Save All"><SaveAll /></ToolButton>
        </ToolGroup>
        <Grip $h={22} />
        <HeapMeter>86.7/120.6MB</HeapMeter>
      </ToolBar>
      <Main>
        <SidePanel>
          <PanelHeader>
            <Grip $h={10} />
            <PanelTitle>Projects</PanelTitle>
            <IconButton aria-label="Minimize window">
              <svg width="9" height="8" viewBox="0 0 9 8"><path d="M0 4l4-4v8z" fill="#333" /><path d="M5.500.5h2v7h-2z" fill="none" stroke="#333" /></svg>
            </IconButton>
            <IconButton aria-label="Close window"><Cross /></IconButton>
          </PanelHeader>
          <Tree>
            {TREE.map(([guides, icon, text, flag]) => (
              <TreeRow key={text}>
                {guides.map((g, i) => <Guide key={i} spec={g} />)}
                <Glyph name={icon} />
                <TreeLabel $bold={flag === "bold"} $selected={flag === "selected"}>{text}</TreeLabel>
              </TreeRow>
            ))}
          </Tree>
          <ScrollTrack>
            <ScrollButton aria-label="Scroll left"><Chevron turn={-90} /></ScrollButton>
            <ScrollThumb $size={134} />
            <ScrollRest $size={77} />
            <ScrollButton aria-label="Scroll right"><Chevron turn={90} /></ScrollButton>
          </ScrollTrack>
        </SidePanel>

        <Documents>
          <TabStrip>
            <DocTab $cut>...et0</DocTab>
            {DOCS.map((d) => (
              <DocTab key={d} $active={d.startsWith("Target")}>
                <button>{d}</button>
                <IconButton aria-label={"Close " + d}><Cross /></IconButton>
              </DocTab>
            ))}
            <StripButtons>
              <StripGroup>
                <StripButton aria-label="Previous tab"><Triangle /></StripButton>
                <StripButton disabled aria-label="Next tab"><Triangle turn={180} color="#aaa" /></StripButton>
              </StripGroup>
              <StripButton aria-label="Tab list"><Triangle turn={-90} /></StripButton>
              <StripButton aria-label="Maximize">
                <svg width="8" height="8" viewBox="0 0 8 8"><path d="M.5.5h7v7h-7zM0 1h8" fill="none" stroke="#222" /></svg>
              </StripButton>
            </StripButtons>
          </TabStrip>
          <DocBody>
            <ViewTabs>
              <ViewTab $active>Overview</ViewTab>
              <ViewTab>Traces</ViewTab>
              <ViewTab>TimeTrCollection</ViewTab>
              <ViewTab>WaveTrCollection</ViewTab>
            </ViewTabs>
            <View>
              <ViewBar>
                <Grip $h={10} />
                <Toggle>LinLog</Toggle>
                <NumberBox defaultValue="3" aria-label="Linear range" />
                <FlatButton>Update</FlatButton>
                <Divider />
                <FlatButton>ShowCohSpec</FlatButton>
                <FlatButton>NormSpecToMax</FlatButton>
              </ViewBar>
              <ChartGrid>
                <Chart label="SAS" w={434} h={227} box={[64.5, 3.5, 423.5, 179.5]} xt={ticks(81.300, 37.600, WAVES)}
                  yt={ticks(9.300, 20.100, ["0.02", "0.01", "0.00", "-0.01", "-0.02", "-0.03", "-0.04", "-0.05", "-0.06"])}
                  zero={49.500} series={sas} from={[-3, -4]} xLabel="Wavelength (nm)" yLabel="SAS" />
                <Chart label="DAS" w={434} h={227} box={[66.5, 3.5, 425.5, 179.5]} xt={ticks(83.300, 37.600, WAVES)}
                  yt={ticks(8.700, 23.750, ["0.03", "0.02", "0.01", "0.00", "-0.01", "-0.02", "-0.03", "-0.04"])}
                  zero={79.500} series={das} from={[3, -4]} xLabel="Wavelength (nm)" yLabel="DAS" />
                <ParamPanel>
                  <ParamScroll>
                    <ParamBox>
                      <Legend>Parameters</Legend>
                      <ParamList>{RATES.map((r) => <li key={r}>{r}</li>)}</ParamList>
                      <ParamList>{LIFETIMES.map((r) => <li key={r}>{r}</li>)}</ParamList>
                    </ParamBox>
                  </ParamScroll>
                  <ScrollTrack $vertical>
                    <ScrollButton aria-label="Scroll up"><Chevron turn={0} /></ScrollButton>
                    <ScrollThumb $vertical $size={169} />
                    <ScrollRest $size={23} />
                    <ScrollButton aria-label="Scroll down"><Chevron turn={180} /></ScrollButton>
                  </ScrollTrack>
                </ParamPanel>
                <Chart label="normSAS" w={434} h={227} box={[64.5, 4.5, 423.5, 180.5]} xt={ticks(81.300, 37.600, WAVES)}
                  yt={ticks(12.300, 22.900, ["0.75", "0.50", "0.25", "0.00", "-0.25", "-0.50", "-0.75", "-1.00"])}
                  zero={80.500} series={normSas} from={[-3, -4]} xLabel="Wavelength (nm)" yLabel="normSAS" />
                <Chart label="normDAS" w={434} h={227} box={[66.5, 4.5, 425.5, 180.5]} xt={ticks(83.300, 37.600, WAVES)}
                  yt={ticks(16.300, 22.300, ["0.75", "0.50", "0.25", "0.00", "-0.25", "-0.50", "-0.75", "-1.00"])}
                  zero={83.500} series={normDas} from={[3, -4]} xLabel="Wavelength (nm)" yLabel="normDAS" />
                <Chart label="Concentrations" w={306} h={227} box={[34.5, 3.5, 299.5, 184.5]} small boldX={false}
                  xt={[[35.500], [41.500], [47.500, "0"], [78.500, "1"], [109.500, "2"], [140.500, "3"], [174, "1e1"], [237.500, "1e2"]]}
                  yt={ticks(9.300, 19.450, ["0.9", "0.8", "0.7", "0.6", "0.5", "0.4", "0.3", "0.2", "0.1", "0.0"])}
                  series={concentrations} from={[-6, -4]} xLabel="Time" />
              </ChartGrid>
              <SectionTitle>Singular value decomposition of the residual matrix</SectionTitle>
              <SvdBox>
                <Chart label="Left singular vectors" title={["Left singular vectors", 219]} w={435} h={205} box={[43.5, 25.5, 425.5, 159.5]} small boldX={false}
                  xt={[[44.500], [53.500], [62.300, "0"], [107.300, "1"], [151.300, "2"], [195.600, "3"], [244.300, "1e1"], [336.300, "1e2"]]}
                  yt={ticks(34.300, 24.400, ["0.2", "0.1", "0.0", "-0.1", "-0.2", "-0.3"])}
                  zero={83.500} series={leftVectors} from={[-4, -26]} xLabel="Time" />
                <Chart label="Screeplot" title={["Screeplot", 150]} w={306} h={205} box={[70.5, 25.5, 294.5, 155.5]} smallY
                  xt={ticks(70.500, 24.900, ["1", "2", "3", "4", "5", "6", "7", "8", "9", "10"])}
                  yt={ticks(44.700, 20.130, ["10^-1.5", "10^-1.6", "10^-1.7", "10^-1.8", "10^-1.9", "10^-2.0"])}
                  series={[]} marks={screeMarks} from={[0, 0]} xLabel="Singular Value Index (n)" yLabel="Log(SVn)" />
                <Chart label="Right singular vectors" title={["Right singular vectors", 209]} w={430} h={205} box={[34.5, 25.5, 416.5, 155.5]}
                  xt={ticks(51.300, 40.100, WAVES)} yt={ticks(31.300, 24.300, ["0.3", "0.2", "0.1", "0.0", "-0.1", "-0.2"])}
                  zero={104.500} series={rightVectors} from={[-305, -26]} scale={[0.4751, 1 / 3]} xLabel="Wavelength (nm)" />
              </SvdBox>
            </View>
          </DocBody>
        </Documents>
      </Main>
      <StatusBar />
    </Window>
  );
}
